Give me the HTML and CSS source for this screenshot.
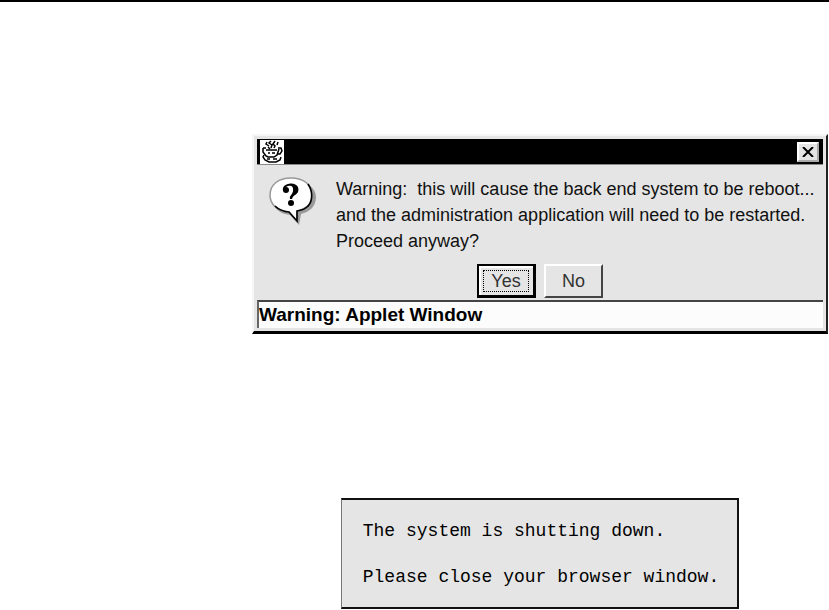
FILE: index.html
```html
<!DOCTYPE html>
<html lang="en">
<head>
    <meta charset="UTF-8">
    <meta name="viewport" content="width=device-width, initial-scale=1.0">
    <title>System Reboot</title>
    <link rel="stylesheet" href="styles.css">
</head>
<body>
    <main class="content">
        <div class="dialog" role="alertdialog" aria-label="Warning" aria-describedby="message">
            <div class="title-bar">
                <svg class="java-icon" viewBox="0 0 24 24" aria-hidden="true">
                    <rect width="24" height="24" fill="#fff"/>
                    <g fill="none" stroke="#000" stroke-width="1.5">
                        <path d="M7 2L6 4L9 6M11 1L9 3L12 5L11 8M15 1L13 4L15 6L14 8M18 2L17 5M8 7L10 9"/>
                        <path d="M3 8H6M3 8V12L6 16L8 17H14L17 15L19 9M6 10H17M18 8H21L22 11L20 14H17"/>
                        <path d="M8 13H10M12 13H15M4 15L3 17L5 20L9 22H16L20 20L21 17M7 19H10M13 19H17"/>
                    </g>
                </svg>
                <button class="close-button" type="button" aria-label="Close">
                    <svg class="close-icon" viewBox="0 0 12 10" aria-hidden="true">
                        <path d="M1 0L11 10M11 0L1 10" stroke="#000" stroke-width="2"/>
                    </svg>
                </button>
            </div>

            <div class="dialog-body">
                <svg class="question-icon" viewBox="0 0 48 50" aria-hidden="true">
                    <path d="M26 5C39 5 48 12 48 21C48 30 42 36 33 38L31 49L22 39C11 38 4 31 4 22C4 12 13 5 26 5Z" fill="#999"/>
                    <path d="M23 2C36 2 44 9 44 19C44 28 38 33 29 35V45L21 36C10 35 2 29 2 19C2 9 10 2 23 2Z" fill="#fff" stroke="#999" stroke-width="1.5"/>
                    <path d="M40 8C46 17 44 27 39 31C36 34 33 34 29 35V45L21 36C16 36 10 33 7 30" fill="none" stroke="#000" stroke-width="1.6"/>
                    <path d="M16 15C14 7 30 6 29 14C29 19 23 18 23 23" fill="none" stroke="#000" stroke-width="2"/>
                    <path d="M21 9C28 7 32 11 30 16C28 19 24 19 24 23H22C21 19 26 18 25 13C25 10 23 10 21 9Z"/>
                    <circle cx="18" cy="14" r="3"/>
                    <circle cx="23" cy="27" r="3"/>
                </svg>
                <p class="message" id="message">
                    Warning:&nbsp; this will cause the back end system to be reboot...<br>
                    and the administration application will need to be restarted.<br>
                    Proceed anyway?
                </p>
            </div>

            <div class="buttons">
                <button class="button button-default" type="button"><span class="button-label">Yes</span></button>
                <button class="button" type="button"><span class="button-label">No</span></button>
            </div>

            <div class="status-bar">Warning: Applet Window</div>
        </div>

        <div class="notice" role="status">
            <p>The system is shutting down.</p>
            <p>Please close your browser window.</p>
        </div>
    </main>
</body>
</html>
```

FILE: styles.css
```css
* {
    box-sizing: border-box;
}

body {
    margin: 0;
    border-top: 2px solid #000;
    background-color: #fff;
    color: #111;
    font-family: "Liberation Sans", Arial, sans-serif;
    font-size: 18px;
    line-height: 26px;
}

.content {
    display: flex;
    flex-direction: column;
    align-items: center;
    gap: 164px;
    padding: 132px 1px 0 252px;
}

.dialog {
    width: 100%;
    padding: 3px;
    background-color: #e5e5e5;
    border: 2px solid #f6f6f6;
    border-right-color: #222;
    border-bottom: 3px solid #000;
}

.title-bar {
    display: flex;
    align-items: center;
    justify-content: space-between;
    height: 26px;
    padding: 0 4px 0 3px;
    background-color: #000;
    border-bottom: 1px solid #888;
}

.java-icon {
    width: 24px;
    height: 24px;
}

.close-button {
    display: flex;
    align-items: center;
    justify-content: center;
    width: 22px;
    height: 20px;
    padding: 0;
    background-color: #e5e5e5;
    border: 2px solid #fff;
    border-right-color: #aaa;
    border-bottom-color: #aaa;
}

.close-icon {
    width: 12px;
    height: 10px;
}

.dialog-body {
    display: flex;
    gap: 20px;
    padding: 11px 11px 0;
}

.question-icon {
    flex: none;
    width: 48px;
    height: 50px;
}

.message {
    margin: 0;
    white-space: nowrap;
}

.buttons {
    display: flex;
    justify-content: center;
    gap: 8px;
    padding: 10px 0 2px;
}

.button {
    width: 59px;
    height: 34px;
    padding: 2px;
    background-color: #e5e5e5;
    border: 2px solid #fff;
    border-right-color: #444;
    border-bottom-color: #444;
    color: #333;
    font: inherit;
    line-height: 20px;
}

.button-default {
    border: 2px solid #000;
    border-right-width: 3px;
    border-bottom-width: 3px;
    box-shadow: inset 2px 2px #fff;
}

.button-label {
    display: block;
    border: 1px solid transparent;
}

.button-default .button-label {
    margin: 0 2px;
    border: 1px dotted #000;
}

.status-bar {
    background-color: #fcfcfc;
    border-top: 2px solid #444;
    border-left: 2px solid #666;
    color: #000;
    font-size: 19px;
    font-weight: bold;
}

.notice {
    padding: 20px 18px 18px 21px;
    background-color: #e5e5e5;
    border: 2px solid #111;
    border-left: 1px solid #777;
    color: #000;
    font-family: "Liberation Mono", "Courier New", monospace;
    font-size: 18px;
    line-height: 23px;
}

.notice p {
    margin: 0;
}

.notice p + p {
    margin-top: 23px;
}
```
